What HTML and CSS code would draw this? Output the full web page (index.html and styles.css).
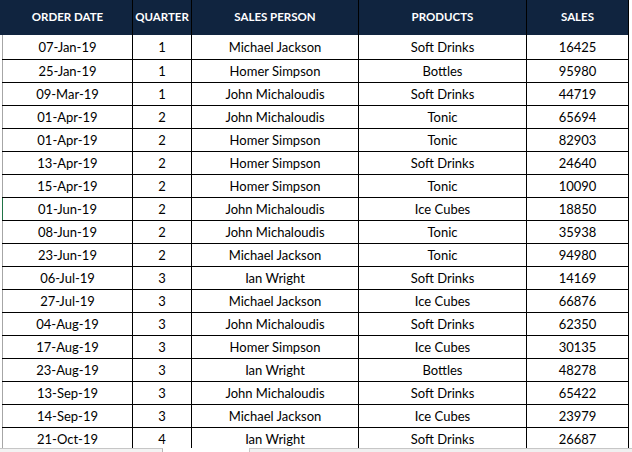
FILE: index.html
```html
<!DOCTYPE html>
<html>
<head>
<meta charset="utf-8">
<link rel="stylesheet" href="styles.css">
</head>
<body>
<div class="sheet">
<table class="grid">
<colgroup><col class="c1"><col class="c2"><col class="c3"><col class="c4"><col class="c5"></colgroup>
<thead>
<tr><th>ORDER DATE</th><th>QUARTER</th><th>SALES PERSON</th><th>PRODUCTS</th><th>SALES</th></tr>
</thead>
<tbody>
<tr><td>07-Jan-19</td><td>1</td><td>Michael Jackson</td><td>Soft Drinks</td><td>16425</td></tr>
<tr><td>25-Jan-19</td><td>1</td><td>Homer Simpson</td><td>Bottles</td><td>95980</td></tr>
<tr><td>09-Mar-19</td><td>1</td><td>John Michaloudis</td><td>Soft Drinks</td><td>44719</td></tr>
<tr><td>01-Apr-19</td><td>2</td><td>John Michaloudis</td><td>Tonic</td><td>65694</td></tr>
<tr><td>01-Apr-19</td><td>2</td><td>Homer Simpson</td><td>Tonic</td><td>82903</td></tr>
<tr><td>13-Apr-19</td><td>2</td><td>Homer Simpson</td><td>Soft Drinks</td><td>24640</td></tr>
<tr><td>15-Apr-19</td><td>2</td><td>Homer Simpson</td><td>Tonic</td><td>10090</td></tr>
<tr><td class="active">01-Jun-19</td><td>2</td><td>John Michaloudis</td><td>Ice Cubes</td><td>18850</td></tr>
<tr><td>08-Jun-19</td><td>2</td><td>John Michaloudis</td><td>Tonic</td><td>35938</td></tr>
<tr><td>23-Jun-19</td><td>2</td><td>Michael Jackson</td><td>Tonic</td><td>94980</td></tr>
<tr><td>06-Jul-19</td><td>3</td><td>Ian Wright</td><td>Soft Drinks</td><td>14169</td></tr>
<tr><td>27-Jul-19</td><td>3</td><td>Michael Jackson</td><td>Ice Cubes</td><td>66876</td></tr>
<tr><td>04-Aug-19</td><td>3</td><td>John Michaloudis</td><td>Soft Drinks</td><td>62350</td></tr>
<tr><td>17-Aug-19</td><td>3</td><td>Homer Simpson</td><td>Ice Cubes</td><td>30135</td></tr>
<tr><td>23-Aug-19</td><td>3</td><td>Ian Wright</td><td>Bottles</td><td>48278</td></tr>
<tr><td>13-Sep-19</td><td>3</td><td>John Michaloudis</td><td>Soft Drinks</td><td>65422</td></tr>
<tr><td>14-Sep-19</td><td>3</td><td>Michael Jackson</td><td>Ice Cubes</td><td>23979</td></tr>
<tr><td>21-Oct-19</td><td>4</td><td>Ian Wright</td><td>Soft Drinks</td><td>26687</td></tr>
</tbody>
</table>
</div>
<div class="hscroll"><div class="tabs"></div><div class="gap"></div><div class="track"></div></div>
</body>
</html>
```

FILE: styles.css
```css
html, body {
  margin: 0;
  padding: 0;
  background: #ffffff;
  overflow: hidden;
}
body {
  width: 632px;
  height: 452px;
  font-family: Lato, "Open Sans", sans-serif;
  font-size: 13px;
  color: #000000;
}
.sheet {
  height: 448px;
  overflow: hidden;
  padding-left: 2px;
  background: linear-gradient(#10243f, #10243f) no-repeat 0 0 / 2px 35px, #ffffff;
}
.grid {
  border-collapse: collapse;
  table-layout: fixed;
  width: 626px;
}
.c1 { width: 130px; }
.c2 { width: 59px; }
.c3 { width: 167px; }
.c4 { width: 168px; }
.c5 { width: 102px; }
.grid th {
  background: #10243f;
  color: #ffffff;
  font-weight: 700;
  font-size: 11.5px;
  height: 35px;
  padding: 0 0 3px 0;
  box-sizing: border-box;
  border-left: 1px solid #000000;
  border-right: 1px solid #000000;
  text-align: center;
  white-space: nowrap;
}
.grid th:first-child { border-left: 1px solid #10243f; }
.grid td {
  height: 23px;
  padding: 1px 0 0 0;
  box-sizing: border-box;
  border: 1px solid #000000;
  text-align: center;
  white-space: nowrap;
}
.grid tbody tr:first-child td { border-top: none; height: 24px; }
.grid td:first-child { border-left: 1px solid #a6a6a6; }
.grid td.active { border-left: 1px solid #217346; }
.hscroll {
  height: 4px;
  display: flex;
  background: #f0f0f0;
}
.tabs {
  width: 162px;
  border-top: 1px solid #c6c6c6;
  border-right: 1px solid #b5b5b5;
  background: #f3f3f3;
}
.gap {
  width: 86px;
  background: #ffffff;
}
.track {
  flex: 1;
  border-top: 1px solid #c6c6c6;
  border-left: 1px solid #c6c6c6;
  background: #f0f0f0;
}
```
